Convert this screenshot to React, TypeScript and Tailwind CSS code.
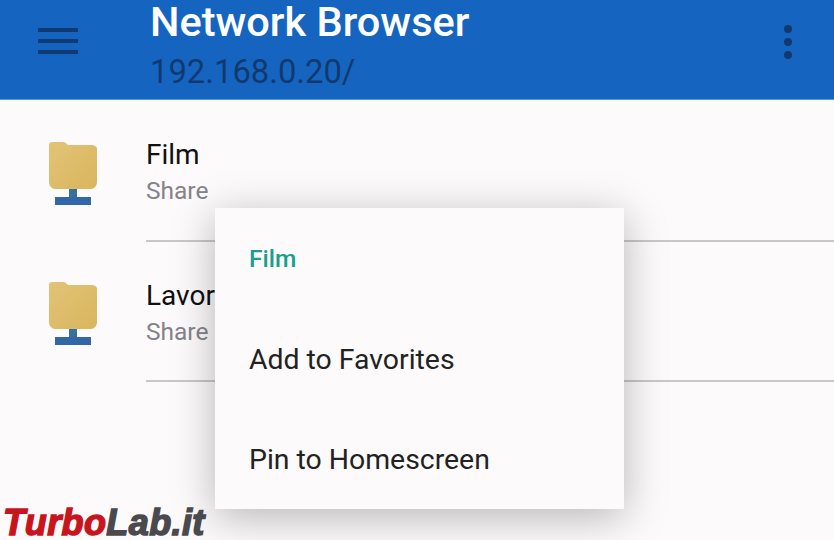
import React from "react";

const FolderIcon = () => (
  <svg width="52" height="68" viewBox="0 0 52 68" className="shrink-0 blur-[0.4px]">
    <defs>
      <linearGradient id="folderFill" x1="0" y1="0" x2="1" y2="1">
        <stop offset="0" stopColor="#e2c478" />
        <stop offset="1" stopColor="#d9b55c" />
      </linearGradient>
    </defs>
    <path d="M22 48h8v10h-8z" fill="#35709f" />
    <rect x="8" y="57" width="36" height="8" fill="#3266a6" />
    <path
      d="M2 5c0-2 1-3 3-3h11c2 0 3 1 5 3h23c3 0 6 1 6 4v33c0 4-3 7-6 7H8c-3 0-6-3-6-7z"
      fill="url(#folderFill)"
    />
  </svg>
);

const Row = ({title, textTop}: {title: string; textTop: string}) => (
  <div className="flex h-[140px] pl-[47px]">
    <div className="pt-[38px]">
      <FolderIcon />
    </div>
    <div className={`ml-[47px] flex-1 flex flex-col border-b-2 border-[#c9c7c9] ${textTop}`}>
      <span className="text-[28px] leading-[36px] text-[#111111]">{title}</span>
      <span className="text-[24.5px] leading-[36px] text-[#85838a]">Share</span>
    </div>
  </div>
);

const App = () => {
  return (
    <div
      className="relative w-[834px] h-[540px] overflow-hidden bg-[#fdfafb]"
      style={{fontFamily: "Roboto, sans-serif"}}
    >
      <div className="flex h-[100px] bg-[#1565c0] border-b border-[#5a97d6]">
        <div className="w-[150px] pl-[38px] pt-[28px]">
          <div className="flex flex-col gap-[7px] w-[40px]">
            <div className="h-[4px] bg-[#0f3a73]" />
            <div className="h-[4px] bg-[#0f3a73]" />
            <div className="h-[4px] bg-[#0f3a73]" />
          </div>
        </div>
        <div className="flex-1 flex flex-col">
          <span className="text-[41.5px] leading-[44px] font-medium text-white">Network Browser</span>
          <span className="mt-[8px] text-[32.8px] leading-[40px] text-[#12396f]">192.168.0.20/</span>
        </div>
        <div className="w-[92px] pt-[25px] pl-[42px]">
          <div className="flex flex-col gap-[5px]">
            <div className="w-[8px] h-[8px] rounded-full bg-[#12396f]" />
            <div className="w-[8px] h-[8px] rounded-full bg-[#12396f]" />
            <div className="w-[8px] h-[8px] rounded-full bg-[#12396f]" />
          </div>
        </div>
      </div>

      <div className="pt-[2px]">
        <Row title="Film" textTop="pt-[35px]" />
        <Row title="Lavoro" textTop="pt-[36px]" />
      </div>

      <div className="absolute left-[215px] top-[208px] w-[409px] h-[301px] pt-[1px] bg-[#fdfafb] shadow-[0_8px_40px_rgba(0,0,0,0.28)] flex flex-col pl-[34px]">
        <div className="h-[100px] flex items-center">
          <span className="text-[24.5px] font-medium text-[#1a9e8f]">Film</span>
        </div>
        <div className="h-[100px] pt-[2px] flex items-center">
          <span className="text-[28.4px] text-[#222222]">Add to Favorites</span>
        </div>
        <div className="h-[100px] pt-[2px] flex items-center">
          <span className="text-[28.4px] text-[#222222]">Pin to Homescreen</span>
        </div>
      </div>

      <div
        className="absolute left-[3px] bottom-0 text-[36px] leading-[34px] font-black italic tracking-[0.4px]"
        style={{fontFamily: "'Liberation Sans', sans-serif"}}
      >
        <span className="text-[#c8151d] [-webkit-text-stroke:1.5px_#c8151d]">Turbo</span>
        <span className="text-[#4a4a4e] [-webkit-text-stroke:1.5px_#4a4a4e]">Lab.it</span>
      </div>
    </div>
  );
};

export default App;
